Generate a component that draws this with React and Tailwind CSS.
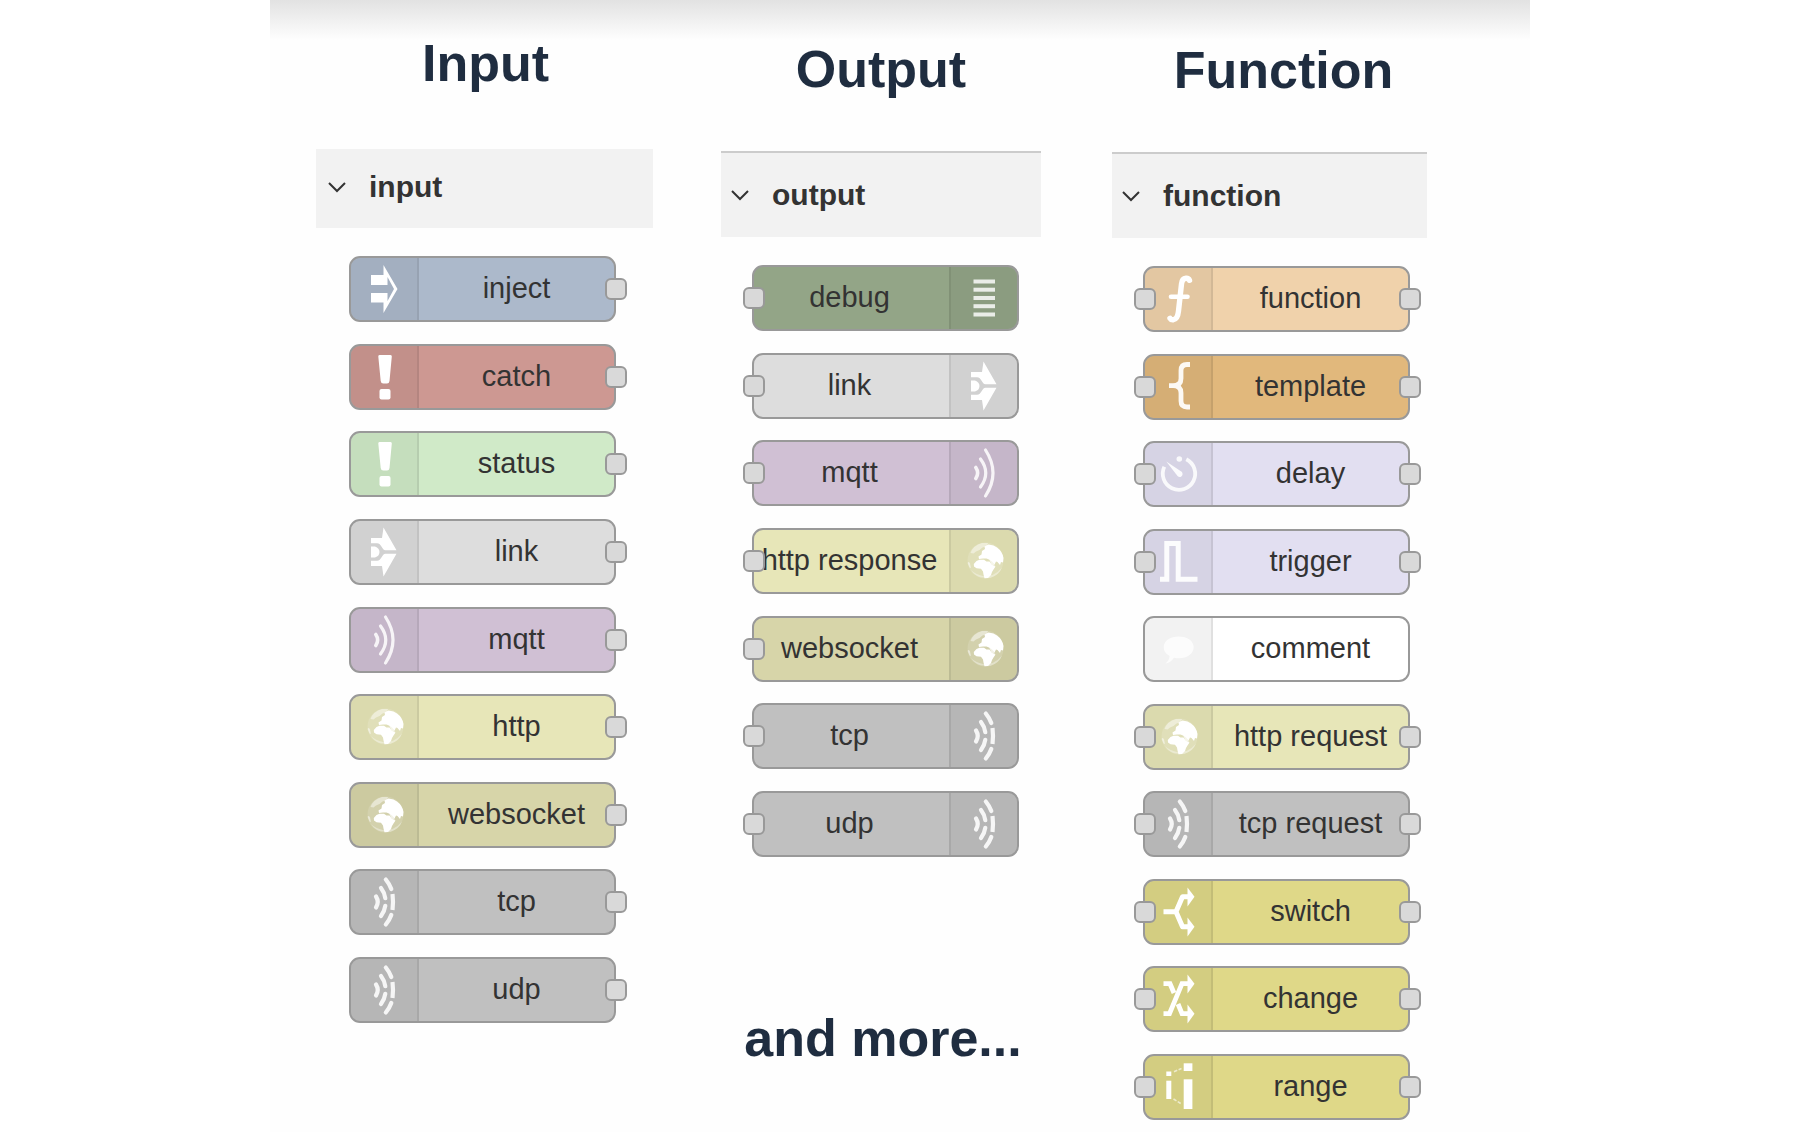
import React from "react";

const arrowHead = "M42.5 6.5L49.5 15.7L42.5 25.5Z";
const arrowHeadLow = "M42.5 36.5L49.5 45.7L42.5 55.5Z";

const ICONS = {
  inject: (
    <path
      fill="white"
      d="M20 17H32.5V7L46.5 31L32.5 55V44.5H20V35H36.5V43L43 31L36.5 19V27H20Z"
    />
  ),
  alert: (
    <g fill="white">
      <path d="M28.5 9H39.5Q41 9 40.8 10.5L38.5 35Q38.2 37.5 36 37.5H32.3Q30 37.5 29.7 35L27.3 10.5Q27.1 9 28.5 9Z" />
      <rect x="28.5" y="43" width="11" height="10.5" rx="2" />
    </g>
  ),
  link: (
    <g fill="white">
      <path d="M20 17H31L32.5 6.5L45.5 29.3H34.5C31 29.3 30.5 22.3 26 22.3H20Z" />
      <path d="M20 45H31L32.5 55.5L45.5 32.7H34.5C31 32.7 30.5 39.7 26 39.7H20Z" />
      <path d="M20 25.5H24Q28.5 27 28.5 31Q28.5 35 24 36.5H20Z" />
    </g>
  ),
  waves: (
    <g fill="none" stroke="white" strokeOpacity="0.85" strokeWidth="3.2" strokeLinecap="round">
      <path strokeWidth="3.6" d="M24.8 25.5Q28.5 31 24.8 36.5" />
      <path d="M29.5 17Q40 31 29.5 45" />
      <path d="M34.5 8Q49.5 31 34.5 54" />
    </g>
  ),
  dashes: (
    <g fill="none" stroke="white" strokeOpacity="0.88" strokeWidth="4.2" strokeLinecap="round">
      <path d="M25 25.5Q28.5 31 25 36.5" />
      <path d="M30 17Q33.5 21.5 34.3 27.2" />
      <path d="M34.3 34.8Q33.5 40.5 30 45" />
      <path d="M34.8 8.5Q38.5 13 40.3 18" />
      <path strokeLinecap="butt" d="M41.5 23Q42.5 31 41.5 39" />
      <path d="M40.3 44Q38.5 49 34.8 53.5" />
    </g>
  ),
  globe: (
    <g fill="white">
      <circle cx="34.5" cy="30.5" r="18" fillOpacity="0.14" />
      <path fillOpacity="0.45" d="M19.5 23Q22 15.500 31 13L37 13L36 16L31.500 17.500L28.500 20L25 21.500L22.500 23.500Z" />
      <path fillOpacity="0.5" d="M16.600 33Q17.500 31 19 33.500L20 38L18.500 37.500Z" />
      <path
        fillOpacity="0.35"
        d="M20 40Q23.500 45.500 29.500 47.300L39 48Q48 45.500 51 37.500Q47 42.500 41.500 45L32 46Q24.500 44.500 20 40Z"
      />
      <path d="M27.500 26.500L30.500 24.500L31 21L34 19L33.500 16.500L37.500 14.500L42.500 15.500L46 17.500Q51.500 21.500 52.500 28L52 32.500L50 32L49 35L46.500 32L45 31.500L43.500 34.500L41 31.500L38.500 29.800L35.500 28.500L32 28.500L28 29Z" />
      <path d="M22.800 34L25.500 31L28.500 29.700L33 29.800L35.500 31.500L38.500 31.500L41 35L44.500 36.500L42.500 39.500L41 42L40 45L37 48L33.500 48.300L32.500 44.500L32 41.500L30 38.700L25.500 38.300L23 36.500Z" />
      <path fillOpacity="0.7" d="M38 29L41.500 31L44 35.500L41 36Z" />
    </g>
  ),
  bars: (
    <g fill="white" fillOpacity="0.82">
      <rect x="22.5" y="12.5" width="21.5" height="4" />
      <rect x="22.5" y="20.7" width="21.5" height="4" />
      <rect x="22.5" y="29" width="21.5" height="4" />
      <rect x="22.5" y="37.2" width="21.5" height="4" />
      <rect x="22.5" y="45.5" width="21.5" height="4" />
    </g>
  ),
  func: (
    <g fill="none" stroke="white" strokeLinecap="round">
      <path strokeWidth="5.4" d="M44.500 12.300Q43.500 10 41 10.200Q37 10.500 36.500 16L33.500 43Q32.700 51 28.500 51.700Q26 52 25 50.300" />
      <path strokeWidth="4.6" d="M26 28.700H42.500" />
    </g>
  ),
  brace: (
    <path
      fill="none"
      stroke="white"
      strokeOpacity="0.92"
      strokeWidth="4.8"
      d="M45 8.5H42Q36 8.5 36 14.5V22.5Q36 29.7 28 29.7H24M28 29.7Q36 29.7 36 37V45Q36 51 42 51H45"
    />
  ),
  timer: (
    <g>
      <path
        fill="none"
        stroke="white"
        strokeOpacity="0.85"
        strokeWidth="3.8"
        d="M41.3 16.2A16.2 16.2 0 1 1 19.3 23.8"
      />
      <circle cx="34.3" cy="16" r="2.8" fill="white" fillOpacity="0.85" />
      <path fill="white" fillOpacity="0.9" d="M21.300 18.500L37 29Q38.500 32 36 33.800Q34 34.500 32.500 33Z" />
    </g>
  ),
  pulse: (
    <path
      fill="none"
      stroke="white"
      strokeOpacity="0.92"
      strokeWidth="5"
      d="M15 48.2H21.8V12.5H33.2V48.2H52.5"
    />
  ),
  bubble: (
    <g fill="white" fillOpacity="0.75">
      <path d="M33.7 18.5C42.5 18.5 48.7 23 48.7 29.3C48.7 35.5 42.5 40.3 34 40.3Q31 40.3 29 39.8Q25.5 45 20.5 45.5Q24.5 42 24.5 38Q18.7 35 18.7 29.3C18.7 23 25 18.5 33.7 18.5Z" />
    </g>
  ),
  branch: (
    <g>
      <path
        fill="none"
        stroke="white"
        strokeWidth="5"
        strokeLinejoin="round"
        d="M18.5 30.7H31M43 15.7H37.5L31 30.7L37.5 45.7H43"
      />
      <path fill="white" d={arrowHead} />
      <path fill="white" d={arrowHeadLow} />
    </g>
  ),
  shuffle: (
    <g>
      <path
        fill="none"
        stroke="white"
        strokeWidth="4.8"
        d="M18.5 45.7H24.5L37 15.7H43M18.5 15.7H25L29 25M33 36L37 45.7H43"
      />
      <path fill="white" d={arrowHead} />
      <path fill="white" d={arrowHeadLow} />
    </g>
  ),
  scale: (
    <g fill="white">
      <rect x="21.3" y="15.5" width="5" height="4.5" />
      <rect x="21.3" y="24.7" width="5" height="18.3" />
      <rect x="38.7" y="7.3" width="8.7" height="7.7" />
      <rect x="38.7" y="23.3" width="8.7" height="29.7" />
      <path
        fill="none"
        stroke="white"
        strokeOpacity="0.6"
        strokeWidth="1.6"
        strokeDasharray="3.5 1.5"
        d="M29 15.7L36.5 12.5M28.5 43L36.5 48"
      />
    </g>
  ),
};

const COLUMNS = [
  {
    title: "Input",
    category: "input",
    column: "w-[337px] mr-[68px] pt-[33px]",
    heading: "mb-14 pl-0.5",
    header: "h-[79px] pl-3 pb-1 gap-[23px]",
    list: "ml-[33px] h-[767px]",
    ports: "out",
    nodes: [
      { label: "inject", icon: "inject", color: "bg-[#acb9cb]" },
      { label: "catch", icon: "alert", color: "bg-[#cd9892]" },
      { label: "status", icon: "alert", color: "bg-[#d0eac8]" },
      { label: "link", icon: "link", color: "bg-[#dddddd]" },
      { label: "mqtt", icon: "waves", color: "bg-[#d0c0d4]" },
      { label: "http", icon: "globe", color: "bg-[#e7e6b8]" },
      { label: "websocket", icon: "globe", color: "bg-[#d7d5a9]" },
      { label: "tcp", icon: "dashes", color: "bg-[#c0c0c0]" },
      { label: "udp", icon: "dashes", color: "bg-[#c0c0c0]" },
    ],
  },
  {
    title: "Output",
    category: "output",
    column: "w-[320px] mr-[71px] pt-[39px]",
    heading: "mb-[52px]",
    header: "h-[86px] pl-[10px] gap-[23px] border-t-2 border-[#cccccc]",
    list: "ml-[31px] h-[592px]",
    ports: "in",
    iconRight: true,
    footer: "and more...",
    nodes: [
      { label: "debug", icon: "bars", color: "bg-[#93a587]" },
      { label: "link", icon: "link", color: "bg-[#dddddd]" },
      { label: "mqtt", icon: "waves", color: "bg-[#d0c0d4]" },
      { label: "http response", icon: "globe", color: "bg-[#e7e6b8]" },
      { label: "websocket", icon: "globe", color: "bg-[#d7d5a9]" },
      { label: "tcp", icon: "dashes", color: "bg-[#c0c0c0]" },
      { label: "udp", icon: "dashes", color: "bg-[#c0c0c0]" },
    ],
  },
  {
    title: "Function",
    category: "function",
    column: "w-[315px] pt-10",
    heading: "mb-[52px] pl-7",
    header: "h-[86px] pl-[10px] gap-[23px] border-t-2 border-[#cccccc]",
    list: "ml-[31px] h-[854px]",
    ports: "both",
    nodes: [
      { label: "function", icon: "func", color: "bg-[#f0d2ab]" },
      { label: "template", icon: "brace", color: "bg-[#e1b87c]" },
      { label: "delay", icon: "timer", color: "bg-[#e2dff1]" },
      { label: "trigger", icon: "pulse", color: "bg-[#e2dff1]" },
      { label: "comment", icon: "bubble", color: "bg-white", ports: "none" },
      { label: "http request", icon: "globe", color: "bg-[#e7e6b8]" },
      { label: "tcp request", icon: "dashes", color: "bg-[#c0c0c0]" },
      { label: "switch", icon: "branch", color: "bg-[#dfd888]" },
      { label: "change", icon: "shuffle", color: "bg-[#dfd888]" },
      { label: "range", icon: "scale", color: "bg-[#dfd888]" },
    ],
  },
];

function Port({ side }) {
  return (
    <span
      className={`absolute top-5 size-[22px] rounded-md border-2 border-[#999999] bg-[#d9d9d9] ${
        side === "left" ? "-left-[11px]" : "-right-[13px]"
      }`}
    />
  );
}

function Node({ node, ports, iconRight }) {
  return (
    <li
      className={`relative flex h-[66px] w-[267px] rounded-[11px] border-2 border-[#999999] ${node.color} ${
        iconRight ? "flex-row-reverse" : ""
      }`}
    >
      <span
        className={`flex w-[68px] shrink-0 border-black/12 bg-black/5 bg-clip-padding ${
          iconRight ? "rounded-r-[9px] border-l-2" : "rounded-l-[9px] border-r-2"
        }`}
      >
        <svg viewBox="0 0 66 62" className="h-[62px] w-[66px]" aria-hidden="true">
          {ICONS[node.icon]}
        </svg>
      </span>
      <span
        className={`flex min-w-0 flex-1 items-center justify-center pb-0.5 text-[29px] leading-9 whitespace-nowrap text-[#333333] ${
          iconRight ? "pr-1" : ""
        }`}
      >
        {node.label}
      </span>
      {(ports === "in" || ports === "both") && <Port side="left" />}
      {(ports === "out" || ports === "both") && <Port side="right" />}
    </li>
  );
}

function Column({ data }) {
  return (
    <section className={`shrink-0 ${data.column}`}>
      <h2 className={`text-center text-[52px] leading-[60px] font-bold ${data.heading}`}>
        {data.title}
      </h2>
      <button
        type="button"
        aria-expanded="true"
        className={`mb-7 flex w-full items-center bg-[#f2f2f2] text-left text-[30px] leading-9 font-bold text-[#333333] ${data.header}`}
      >
        <svg viewBox="0 0 18 12" className="h-3 w-[18px]" aria-hidden="true">
          <path d="M1 2L9 10L17 2" fill="none" stroke="#333333" strokeWidth="2" />
        </svg>
        {data.category}
      </button>
      <ul className={`flex flex-col justify-between ${data.list}`}>
        {data.nodes.map((node) => (
          <Node
            key={node.label}
            node={node}
            ports={node.ports || data.ports}
            iconRight={data.iconRight}
          />
        ))}
      </ul>
      {data.footer && (
        <p className="mt-[151px] pl-1 text-center text-[52px] leading-[60px] font-bold whitespace-nowrap">
          {data.footer}
        </p>
      )}
    </section>
  );
}

export default function App() {
  return (
    <div className="min-h-screen bg-white font-['Liberation_Sans',Arial,sans-serif]">
      <main className="mx-auto flex min-h-screen w-[70%] min-w-[1160px] items-start bg-linear-to-b from-[#e2e2e2] to-[#fefefe] to-[40px] pl-[46px] text-[#1f2d40]">
        {COLUMNS.map((column) => (
          <Column key={column.category} data={column} />
        ))}
      </main>
    </div>
  );
}
